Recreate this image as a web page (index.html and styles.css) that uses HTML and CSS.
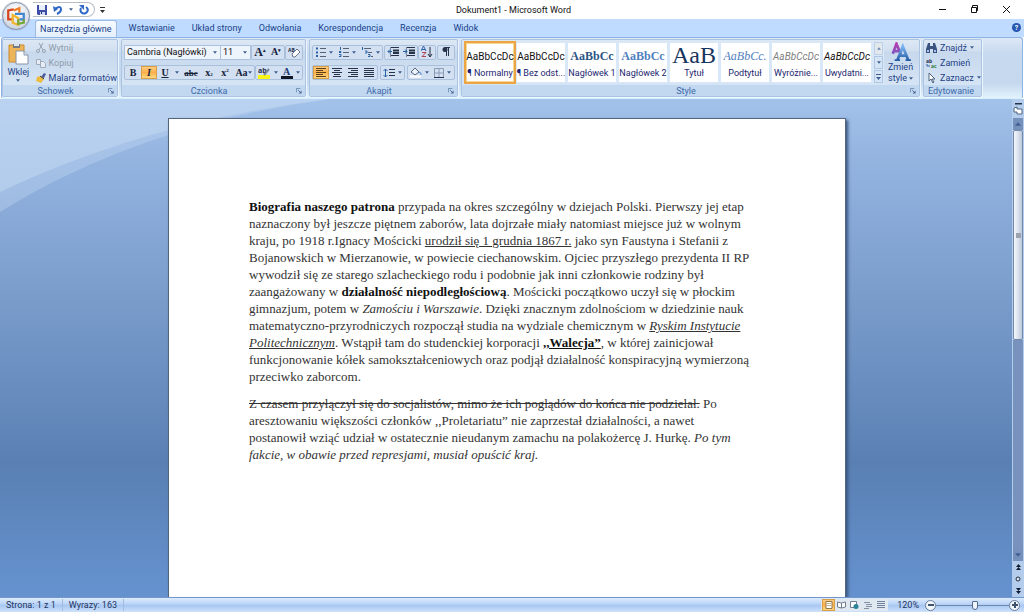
FILE: index.html
```html
<!DOCTYPE html>
<html lang="pl">
<head>
<meta charset="utf-8">
<title>Dokument1 - Microsoft Word</title>
<link rel="stylesheet" href="styles.css">
</head>
<body>
<svg width="0" height="0" class="defs" aria-hidden="true">
  <symbol id="arrow" viewBox="0 0 5 3"><path d="M0 0h5L2.500 3z" fill="#3f5f92"/></symbol>
  <symbol id="launch" viewBox="0 0 7 7"><path d="M.5 5V.5H5" fill="none" stroke="#6583ae"/><path d="M2.500 2.500L5 5" stroke="#4a6693"/><path d="M6.500 3v3.500H3z" fill="#4a6693"/></symbol>
  <linearGradient id="ga" x1="0" y1="0" x2="0" y2="1"><stop offset="0" stop-color="#b33fb0"/><stop offset="1" stop-color="#7d58c2"/></linearGradient>
  <linearGradient id="gb" x1="0" y1="0" x2="0" y2="1"><stop offset="0" stop-color="#79b4f2"/><stop offset="1" stop-color="#275ea8"/></linearGradient>
</svg>
<div class="app">
  <header class="titlebar">
    <button class="office" aria-label="Przycisk pakietu Office">
      <svg width="20" height="20" viewBox="0 0 18 18" fill="none" stroke-width="2"><path d="M7 3L2 4v8h5" stroke="#d6461e"/><path d="M7 4l5-2v4" stroke="#ef7d23"/><path d="M8 7h8v5h-4" stroke="#4187d0"/><path d="M6 8v7l5 2v-6z" stroke="#f1b62a"/><path d="M11 12v4l5-1v-3" stroke="#76a83c"/></svg>
    </button>
    <div class="quick">
      <button aria-label="Zapisz"><svg width="10" height="10" viewBox="0 0 10 10"><path d="M0 0h10v10H1L0 9z" fill="#3c4ea8"/><path d="M2 0h6v5H2z" fill="#e8effb"/><path d="M3 7h5v3H3z" fill="#cfd8ef"/><path d="M4 7h1v2H4z" fill="#28367e"/></svg></button>
      <button aria-label="Cofnij"><svg width="10" height="10" viewBox="0 0 10 10"><path d="M2 4Q8 0 8 4.500Q8 7 4 9" fill="none" stroke="#2f67c8" stroke-width="2"/><path d="M0 1l1 6 4-3z" fill="#2f67c8"/></svg></button>
      <button aria-label="Lista cofania"><svg width="4" height="3"><use href="#arrow"/></svg></button>
      <button aria-label="Powtórz"><svg width="10" height="10" viewBox="0 0 10 10"><path d="M7 2Q10 4 8 7Q5 10 2 7Q1 5 2 3" fill="none" stroke="#2f67c8" stroke-width="2"/><path d="M0 0h5v5z" fill="#2f67c8"/></svg></button>
    </div>
    <button class="more" aria-label="Dostosuj pasek"><svg width="5" height="6" viewBox="0 0 5 6"><path d="M0 0h5v1H0zM0 3h5L2.500 6z" fill="#333"/></svg></button>
    <h1>Dokument1 - Microsoft Word</h1>
    <div class="window">
      <button aria-label="Minimalizuj"><svg width="9" height="9"><path d="M1 4.500h7" stroke="#111"/></svg></button>
      <button aria-label="Przywróć"><svg width="9" height="9" fill="none" stroke="#111"><path d="M1.500 2.500h5v5h-5zM2.500 2V.5h5v5H7"/></svg></button>
      <button aria-label="Zamknij"><svg width="9" height="9" stroke="#111"><path d="M1 1l7 7M8 1L1 8"/></svg></button>
    </div>
  </header>
  <nav class="tabs">
    <a href="#" class="active">Narzędzia główne</a><a href="#">Wstawianie</a><a href="#">Układ strony</a><a href="#">Odwołania</a><a href="#">Korespondencja</a><a href="#">Recenzja</a><a href="#">Widok</a>
    <button class="help" aria-label="Pomoc">?</button>
  </nav>
  <section class="ribbon">
    <section class="group clip">
      <div class="body">
        <button class="big"><svg width="21" height="22" viewBox="0 0 21 22"><path d="M1 2h15v17H1z" fill="#edb557" stroke="#c98a2f"/><path d="M5 1h7v4H5z" fill="#747a84"/><path d="M6 1h5v2H6z" fill="#dde3ea"/><path d="M8 8h8l4 4v9H8z" fill="#fff" stroke="#8894aa"/><path d="M16 8v4h4" fill="#dce7f7" stroke="#8894aa"/></svg><span>Wklej</span><svg width="4" height="3"><use href="#arrow"/></svg></button>
        <div class="stack">
          <button disabled><svg width="10" height="10" viewBox="0 0 10 10" fill="none" stroke="#98a3b3"><path d="M3 0l4 7M7 0L3 7"/><circle cx="2" cy="8" r="1.500"/><circle cx="8" cy="8" r="1.500"/></svg>Wytnij</button>
          <button disabled><svg width="10" height="10" viewBox="0 0 10 10" fill="#e7edf4" stroke="#a0abba"><path d="M.5 1.500h4v5h-4zM4.500 3.500h3l2 2v4h-5z"/></svg>Kopiuj</button>
          <button><svg width="10" height="10" viewBox="0 0 10 10"><path d="M5 4l3-4 2 1-2 4z" fill="#505b9d"/><path d="M1 4l4-1 3 3-3 4-5-2z" fill="#edbd40"/><path d="M4 3l4 3" stroke="#333b60"/></svg>Malarz formatów</button>
        </div>
      </div>
      <footer><h2>Schowek</h2><button aria-label="Schowek: opcje"><svg width="6" height="6" viewBox="0 0 7 7"><use href="#launch" width="7" height="7"/></svg></button></footer>
    </section>
    <section class="group font">
      <div class="body rows">
        <div class="row">
          <span class="combo name"><select aria-label="Czcionka"><option>Cambria (Nagłówki)</option></select><svg width="4" height="3"><use href="#arrow"/></svg></span><span class="combo size"><select aria-label="Rozmiar"><option>11</option></select><svg width="4" height="3"><use href="#arrow"/></svg></span>
          <div class="set"><button class="serif grow" aria-label="Zwiększ">A<sup>▴</sup></button><button class="serif small" aria-label="Zmniejsz">A<sup>▾</sup></button></div>
          <div class="set"><button aria-label="Wyczyść formatowanie"><svg width="12" height="11" viewBox="0 0 12 11"><text x="0" y="5" class="micro">AB</text><path d="M4 7l5-5 3 3-5 5H5z" fill="#fff" stroke="#6b7691"/></svg></button></div>
        </div>
        <div class="row"><div class="set">
          <button class="serif">B</button><button class="serif on"><i>I</i></button><button class="serif"><u>U</u></button><button class="thin" aria-label="Podkreślenie"><svg width="4" height="3"><use href="#arrow"/></svg></button><button class="serif abc"><s>abc</s></button><button class="serif">x<sub>2</sub></button><button class="serif">x<sup>2</sup></button><button class="serif case">Aa<svg width="4" height="3"><use href="#arrow"/></svg></button></div>
          <div class="set"><button class="wide" aria-label="Wyróżnienie"><svg width="13" height="12" viewBox="0 0 13 12"><path d="M0 8h12v4H0z" fill="#f9f514"/><text x="0" y="6" class="tiny">ab</text><path d="M6 8l5-6" stroke="#788394" stroke-width="2"/></svg><svg width="4" height="3"><use href="#arrow"/></svg></button><button class="wide" aria-label="Kolor czcionki"><svg width="12" height="12" viewBox="0 0 12 12"><text x="2" y="8" class="letter">A</text><path d="M0 9h12v3H0z" fill="#101828"/></svg><svg width="4" height="3"><use href="#arrow"/></svg></button></div>
        </div>
      </div>
      <footer><h2>Czcionka</h2><button aria-label="Czcionka: opcje"><svg width="6" height="6" viewBox="0 0 7 7"><use href="#launch" width="7" height="7"/></svg></button></footer>
    </section>
    <section class="group para">
      <div class="body rows">
        <div class="row">
          <div class="set"><button class="wide" aria-label="Punktory"><svg width="10" height="10"><path d="M0 1.500h2M0 5.500h2M0 9h2" stroke="#2862a6" stroke-width="2"/><path d="M4 1.500h6M4 5.500h6M4 9.500h6" stroke="#546078"/></svg><svg width="4" height="3"><use href="#arrow"/></svg></button><button class="wide" aria-label="Numerowanie"><svg width="10" height="10"><path d="M1.500 0v3M0 4.500h2v1H0M0 7.500h2v2H0" fill="none" stroke="#2862a6"/><path d="M4 1.500h6M4 5.500h6M4 9.500h6" stroke="#546078"/></svg><svg width="4" height="3"><use href="#arrow"/></svg></button><button class="wide" aria-label="Lista wielopoziomowa"><svg width="12" height="10"><path d="M1.500 0v3M4 4h2v2H4M7 7.500h2v2H7" fill="none" stroke="#2862a6"/><path d="M3 1.500h7M7 5.500h4M10 9.500h2" stroke="#546078"/></svg><svg width="4" height="3"><use href="#arrow"/></svg></button></div>
          <div class="set"><button aria-label="Zmniejsz wcięcie"><svg width="12" height="10"><path d="M4 .5h8M4 8.500h8" stroke="#27334a"/><path d="M6 3.500h6M6 6h6" stroke="#27334a" stroke-width="2"/><path d="M3.500.5v9" stroke="#27334a" stroke-dasharray="1 1"/><path d="M5 4.500H1M3 2.500l-2 2 2 2" fill="none" stroke="#2862a6"/></svg></button><button aria-label="Zwiększ wcięcie"><svg width="12" height="10"><path d="M4 .5h8M4 8.500h8" stroke="#27334a"/><path d="M6 3.500h6M6 6h6" stroke="#27334a" stroke-width="2"/><path d="M3.500.5v9" stroke="#27334a" stroke-dasharray="1 1"/><path d="M0 4.500h4M2 2.500l2 2-2 2" fill="none" stroke="#2862a6"/></svg></button></div>
          <div class="set"><button aria-label="Sortuj"><svg width="12" height="12" viewBox="0 0 12 12" fill="none"><path d="M0 5l2.500-5L5 5M1 3.500h3" stroke="#315fae"/><path d="M1 6.500h4l-4 4h4" stroke="#af4253"/><path d="M9 1v9M7 8l2 3 2-3" stroke="#222c40"/></svg></button></div>
          <div class="set"><button aria-label="Znaki formatowania"><svg width="8" height="10"><path d="M4.500 0v9M6.500 0v9M3 .5h5" stroke="#27334a"/><circle cx="3" cy="2.500" r="2.500" fill="#27334a"/></svg></button></div>
        </div>
        <div class="row">
          <div class="set"><button class="on" aria-label="Do lewej"><svg width="10" height="9"><path d="M0 .5h10M0 2.500h7M0 4.500h10M0 6.500h7M0 8.500h10" stroke="#5b3f16"/></svg></button><button aria-label="Wyśrodkuj"><svg width="10" height="9"><path d="M0 .5h10M2 2.500h6M0 4.500h10M2 6.500h6M1 8.500h8" stroke="#27334a"/></svg></button><button aria-label="Do prawej"><svg width="10" height="9"><path d="M0 .5h10M3 2.500h7M0 4.500h10M3 6.500h7M0 8.500h10" stroke="#27334a"/></svg></button><button aria-label="Wyjustuj"><svg width="10" height="9"><path d="M0 .5h10M0 2.500h10M0 4.500h10M0 6.500h10M0 8.500h10" stroke="#27334a"/></svg></button></div>
          <div class="set"><button class="wide" aria-label="Interlinia"><svg width="12" height="10"><path d="M2.500 1v8M.5 3l2-2 2 2M.5 7l2 2 2-2" fill="none" stroke="#2862a6"/><path d="M6 1.500h6M6 4.500h6M6 7.500h6" stroke="#27334a"/></svg><svg width="4" height="3"><use href="#arrow"/></svg></button></div>
          <div class="set"><button class="wide" aria-label="Cieniowanie"><svg width="12" height="11" viewBox="0 0 12 11"><path d="M1 5l4-4 4 4-4 3z" fill="#edf3fb" stroke="#53647f"/><path d="M9 5q3 1 2 3" fill="none" stroke="#4382c8"/><path d="M0 9.500h11" stroke="#fff" stroke-width="2"/></svg><svg width="4" height="3"><use href="#arrow"/></svg></button><button class="wide" aria-label="Obramowanie"><svg width="10" height="10" fill="none"><path d="M.5.5h9v9M.5.5v9M5 0v9M0 5h9" stroke="#8b9cb7"/><path d="M0 9.500h10" stroke="#27334a"/></svg><svg width="4" height="3"><use href="#arrow"/></svg></button></div>
        </div>
      </div>
      <footer><h2>Akapit</h2><button aria-label="Akapit: opcje"><svg width="6" height="6" viewBox="0 0 7 7"><use href="#launch" width="7" height="7"/></svg></button></footer>
    </section>
    <section class="group styles">
      <div class="body">
        <div class="gallery">
          <button class="chosen"><b class="plain">AaBbCcDc</b><span>¶ Normalny</span></button>
          <button><b class="plain">AaBbCcDc</b><span>¶ Bez odst...</span></button>
          <button><b class="h1">AaBbCc</b><span>Nagłówek 1</span></button>
          <button><b class="h2">AaBbCc</b><span>Nagłówek 2</span></button>
          <button><b class="title">AaB</b><span>Tytuł</span></button>
          <button><b class="sub">AaBbCc.</b><span>Podtytuł</span></button>
          <button><b class="soft">AaBbCcDc</b><span>Wyróżnie...</span></button>
          <button><b class="em">AaBbCcDc</b><span>Uwydatni...</span></button>
          <div class="steps"><button disabled aria-label="W górę"><svg width="4" height="3" class="flip"><use href="#arrow"/></svg></button><button aria-label="W dół"><svg width="4" height="3"><use href="#arrow"/></svg></button><button aria-label="Więcej"><svg width="5" height="6" viewBox="0 0 5 6"><path d="M0 0h5v1H0zM0 3h5L2.500 6z" fill="#3f5f92"/></svg></button></div>
        </div>
        <button class="big change"><svg width="22" height="20" viewBox="0 0 22 22"><path fill="none" stroke="url(#ga)" stroke-width="3" d="M2 13L6 2l5 12M3 10h6"/><path fill="none" stroke="url(#gb)" stroke-width="3" d="M7 20l6-15 6 15M9 15h8"/><path d="M4 20h6M16 20h6" stroke="#275ea8" stroke-width="2"/></svg><span class="label">Zmień</span><span class="label">style <svg width="4" height="3"><use href="#arrow"/></svg></span></button>
      </div>
      <footer><h2>Style</h2><button aria-label="Style: opcje"><svg width="6" height="6" viewBox="0 0 7 7"><use href="#launch" width="7" height="7"/></svg></button></footer>
    </section>
    <section class="group edit">
      <div class="body"><div class="stack">
        <button><svg width="11" height="10" viewBox="0 0 11 10"><path d="M2 0h2v3h3V0h2l2 6v4H7V6H4v4H0V6z" fill="#3b5380"/><path d="M1 7h2v2H1zM8 7h2v2H8z" fill="#a7c4ea"/></svg>Znajdź<svg width="4" height="3"><use href="#arrow"/></svg></button>
        <button><svg width="11" height="10" viewBox="0 0 11 10"><text x="0" y="5" class="micro">ab</text><text x="5" y="10" class="micro green">ac</text><path d="M1 6v2h3" fill="none" stroke="#3762a5"/></svg>Zamień</button>
        <button><svg width="11" height="10" viewBox="0 0 11 10"><path d="M3 0v8l2-2 2 4 1-1-2-3h3z" fill="#fff" stroke="#53647f"/></svg>Zaznacz<svg width="4" height="3"><use href="#arrow"/></svg></button>
      </div></div>
      <footer><h2>Edytowanie</h2></footer>
    </section>
  </section>
  <main class="workspace">
    <svg class="waves" width="340" height="120" viewBox="0 0 340 120"><path d="M0 0H330Q150 22 0 93z" fill="#c5dbf4" fill-opacity=".5"/><path d="M0 0H330Q140 26 0 113z" fill="#c5dbf4" fill-opacity=".35"/></svg>
    <div class="canvas">
      <article class="page">
        <p><b>Biografia naszego patrona</b> przypada na okres szczególny w dziejach Polski. Pierwszy jej etap<br>naznaczony był jeszcze piętnem zaborów, lata dojrzałe miały natomiast miejsce już w wolnym<br>kraju, po 1918 r.Ignacy Mościcki <u>urodził się 1 grudnia 1867 r.</u> jako syn Faustyna i Stefanii z<br>Bojanowskich w Mierzanowie, w powiecie ciechanowskim. Ojciec przyszłego prezydenta II RP<br>wywodził się ze starego szlacheckiego rodu i podobnie jak inni członkowie rodziny był<br>zaangażowany w <b>działalność niepodległościową</b>. Mościcki początkowo uczył się w płockim<br>gimnazjum, potem w <i>Zamościu i Warszawie</i>. Dzięki znacznym zdolnościom w dziedzinie nauk<br>matematyczno-przyrodniczych rozpoczął studia na wydziale chemicznym w <i><u>Ryskim Instytucie</u></i><br><i><u>Politechnicznym</u></i>. Wstąpił tam do studenckiej korporacji <b><u>,,Walecja”</u></b>, w której zainicjował<br>funkcjonowanie kółek samokształceniowych oraz podjął działalność konspiracyjną wymierzoną<br>przeciwko zaborcom.</p>
        <p><s>Z czasem przyłączył się do socjalistów, mimo że ich poglądów do końca nie podzielał.</s> Po<br>aresztowaniu większości członków ,,Proletariatu” nie zaprzestał działalności, a nawet<br>postanowił wziąć udział w ostatecznie nieudanym zamachu na polakożercę J. Hurkę. <i>Po tym</i><br><i>fakcie, w obawie przed represjami, musiał opuścić kraj.</i></p>
      </article>
    </div>
    <aside class="scroll">
      <button aria-label="Linijka" class="ruler"><svg width="10" height="12" viewBox="0 0 10 12"><path d="M2 .5h7" stroke="#26334c" stroke-width="2"/><path d="M1 5l3-1v2h5v5H4V9H1z" fill="#fff" stroke="#4e6485"/></svg></button>
      <button aria-label="Przewiń w górę" class="end"><svg width="6" height="4" class="flip"><use href="#arrow"/></svg></button>
      <div class="thumb"></div>
      <div class="track"></div>
      <button aria-label="Przewiń w dół" class="end"><svg width="6" height="4"><use href="#arrow"/></svg></button>
      <button aria-label="Poprzednia strona" class="jump"><svg width="5" height="6"><path d="M0 3l2.500-3L5 3zM0 6l2.500-3L5 6z" fill="#111c30"/></svg></button>
      <button aria-label="Wybierz obiekt" class="jump"><svg width="6" height="6"><circle cx="3" cy="3" r="2" fill="#dbe6f5" stroke="#222c3d"/></svg></button>
      <button aria-label="Następna strona" class="jump"><svg width="5" height="6"><path d="M0 0l2.500 3L5 0zM0 3l2.500 3L5 3z" fill="#111c30"/></svg></button>
    </aside>
  </main>
  <footer class="status">
    <span class="cell">Strona: 1 z 1</span><span class="cell">Wyrazy: 163</span>
    <div class="views">
      <button class="on" aria-label="Układ wydruku"><svg width="8" height="8"><path d="M1 .5h6v7H1z" fill="#fff" stroke="#8d7950"/><path d="M2 2.500h4M2 4.500h4" stroke="#c5b38f"/></svg></button>
      <button aria-label="Czytanie"><svg width="9" height="8"><path d="M.5 1l4 1 4-1v5l-4 1-4-1zM4.500 2v5" fill="#fff" stroke="#717e92"/></svg></button>
      <button aria-label="Układ sieci Web"><svg width="9" height="8"><path d="M.5.5h6v6h-6z" fill="#fff" stroke="#717e92"/><circle cx="6" cy="5.500" r="2.500" fill="#2b839b"/></svg></button>
      <button aria-label="Konspekt"><svg width="8" height="8"><path d="M0 1.500h6M2 3.500h6M2 5.500h6M0 7.500h5" stroke="#8391a5"/></svg></button>
      <button aria-label="Wersja robocza"><svg width="8" height="8"><path d="M0 .5h8M0 2.500h8M0 4.500h8M0 6.500h8" stroke="#71829a"/></svg></button>
    </div>
    <label for="zoom">120%</label>
    <button class="round" aria-label="Pomniejsz"><svg width="6" height="6"><path d="M0 3h6" stroke="#3e5370" stroke-width="2"/></svg></button>
    <input id="zoom" type="range" min="10" max="190" value="106">
    <button class="round" aria-label="Powiększ"><svg width="6" height="6"><path d="M0 3h6M3 0v6" stroke="#3e5370" stroke-width="2"/></svg></button>
  </footer>
</div>
</body>
</html>
```
FILE: styles.css
```css
* { box-sizing: border-box; }
body { margin: 0; font: 9px/12px Roboto, "Open Sans", sans-serif; color: #1d3f86; }
button, select { font: inherit; color: inherit; border: 0; padding: 0; margin: 0; background: none; }
button { display: flex; align-items: center; justify-content: center; }
h1, h2, p { margin: 0; font-weight: 400; }
svg { flex: none; }
.defs { position: absolute; }
.app { height: 100vh; display: flex; flex-direction: column; overflow: hidden; }

.titlebar { height: 19px; flex: none; display: flex; align-items: center; background: #fff; position: relative; }
.titlebar h1 { flex: 1; text-align: center; font-size: 9px; color: #111; padding-right: 20px; }
.office { position: absolute; z-index: 2; left: 2px; top: 2px; width: 28px; height: 28px; border-radius: 50%; border: 1px solid #8793a7; background: radial-gradient(circle at 50% 30%, #fff, #dbe1ea 60%, #b6c2d3); box-shadow: 0 0 1px #667791; }
.quick { margin-left: 32px; width: 63px; height: 15px; display: flex; align-items: center; gap: 6px; padding-left: 4px; border: 1px solid #b8bdc6; border-left-color: #fff; border-radius: 0 8px 8px 0; }
.quick, .more { flex: none; }
.more { width: 14px; }
.window { display: flex; gap: 23px; padding-right: 13px; }

.tabs { height: 18px; flex: none; display: flex; background: #bfdbff; padding: 1px 3px 0 35px; color: #174088; }
.tabs a { color: inherit; text-decoration: none; white-space: nowrap; line-height: 17px; margin-right: 17px; }
.tabs a.active { padding: 0 4px; line-height: 16px; background: linear-gradient(#f7fbff, #e3effc); border: 1px solid #9dbbe3; border-bottom: 0; border-radius: 3px 3px 0 0; margin-right: 12px; }
.tabs .help { margin: 3px 0 0 auto; width: 9px; height: 9px; border-radius: 50%; background: #2557b0; color: #fff; font-size: 7px; font-weight: 700; }

.ribbon { height: 62px; flex: none; display: flex; gap: 3px; padding: 1px 0; margin: 0 1px; border: 1px solid #8db2e3; border-bottom-color: #d8f1ff; border-radius: 3px; background: linear-gradient(#dce8f6, #c8daef 25%, #c5d8ee 75%, #e2f2fd); }
.group { display: flex; flex-direction: column; flex: none; border: 1px solid #aac4e2; border-radius: 2px; box-shadow: 1px 1px 0 #eef6fd; background: linear-gradient(#dde8f5, #d1dfef 20%, #c7d8ed 21%, #dae9f7); overflow: hidden; }
.group .body { flex: 1; display: flex; min-height: 0; }
.group > footer { height: 11px; flex: none; display: flex; align-items: center; background: #c1d8f0; color: #3e6aaa; padding-right: 3px; }
.group h2 { flex: 1; text-align: center; font-size: 9px; line-height: 10px; }
.clip { width: 116px; }
.font { width: 185px; }
.para { width: 149px; }
.styles { width: 459px; }
.edit { width: 59px; }

.big { flex-direction: column; width: 34px; gap: 2px; line-height: 10px; }
.stack { display: flex; flex-direction: column; justify-content: space-around; align-items: flex-start; padding-left: 2px; }
.stack button { gap: 3px; line-height: 14px; white-space: nowrap; }
.stack button:disabled { color: #8f9aab; }

.rows { flex-direction: column; justify-content: space-around; padding: 2px; }
.row { display: flex; justify-content: space-between; }
.set { display: flex; height: 15px; border: 1px solid #a9c0dd; border-radius: 2px; background: #d2e0f1; }
.set button { width: 16px; gap: 2px; color: #17233b; }
.set .wide { width: 23px; gap: 3px; }
.set .thin { width: 8px; }
.set .abc { width: 20px; }
.set .case { width: 21px; }
.on { background: linear-gradient(#fbd08c, #fdb04a 50%, #ffe08a); box-shadow: inset 0 0 0 1px #d99f45; }
.set .serif { font: bold 10px/12px "Liberation Serif", serif; gap: 0; }
.set .grow { font-size: 12px; }
.set .abc { font-size: 9px; }
.serif sup, .serif sub { font-size: 5px; line-height: 5px; }
.serif sup { align-self: flex-start; padding-top: 2px; }
.serif sub { align-self: flex-end; padding-bottom: 2px; }
.combo { display: grid; align-items: center; justify-items: end; height: 15px; border: 1px solid #abc1de; background: #eef4fb; color: #111; }
.combo > * { grid-area: 1 / 1; }
.combo svg { margin-right: 3px; pointer-events: none; }
.combo select { width: 100%; appearance: none; padding-left: 2px; }
.name { width: 97px; }
.size { width: 31px; margin-left: -1px; }
.micro { font: bold 5px "Open Sans", sans-serif; fill: #1d2b48; }
.green { fill: #2b7a35; }
.tiny { font: bold 7px "Open Sans", sans-serif; fill: #1d2b48; }
.letter { font: bold 10px "Liberation Serif", serif; fill: #1f3a75; }

.styles .body { padding: 2px; justify-content: space-between; }
.gallery { display: flex; gap: 3px; background: #d9e8f8; padding: 1px 1px 1px 2px; align-items: center; }
.gallery > button { width: 48px; height: 39px; flex-direction: column; justify-content: flex-end; align-items: center; background: #fff; color: #1b1e6e; padding-bottom: 1px; }
.gallery > .chosen { box-shadow: 0 0 0 2px #eba544, inset 0 0 0 1px #f8d68e; }
.gallery b { height: 19px; font-weight: 400; font-size: 10px; line-height: 19px; white-space: nowrap; color: #111; }
.gallery span { line-height: 15px; white-space: nowrap; }
.gallery .h1 { font: bold 12px/19px "Liberation Serif", serif; color: #2c5486; }
.gallery .h2 { font: bold 12px/19px "Liberation Serif", serif; color: #4f81bd; }
.gallery .title { font: 24px/22px "Liberation Serif", serif; color: #17365d; height: 22px; }
.gallery .sub { font: italic 12px/19px "Liberation Serif", serif; color: #4f81bd; }
.gallery .soft { font-style: italic; color: #808080; }
.gallery .em { font-style: italic; }
.steps { display: flex; flex-direction: column; gap: 1px; }
.steps button { width: 9px; height: 13px; border: 1px solid #b0c8e4; background: #d5e5f6; }
.steps button:disabled { background: #e8e8e8; opacity: .7; }
.flip { transform: rotate(180deg); }
.change { width: 36px; gap: 0; }
.label { display: flex; align-items: center; gap: 2px; line-height: 11px; }

.workspace { flex: 1; min-height: 0; display: flex; position: relative; background: linear-gradient(#a3c2ea, #94b4e0 12%, #5a80b3 73%, #6592cf 100%); }
.waves { position: absolute; left: 0; top: 0; }
.canvas { flex: 1; display: flex; justify-content: center; padding: 19px 0 0 2px; overflow: hidden; position: relative; }
.page { width: 678px; background: #fff; border: 1px solid #54657f; border-bottom: 0; box-shadow: 2px 2px 3px #39557f; padding: 79px 80px 0; font: 13px/17px "Liberation Serif", serif; color: #333; white-space: nowrap; }
.page p { margin-bottom: 10px; }
.page b { color: #111; }
.scroll { width: 12px; display: flex; flex-direction: column; align-items: stretch; background: #b5cdec; position: relative; padding: 0 1px; }
.ruler { height: 19px; }
.end { height: 12px; background: #7590ba; }
.thumb { flex: 209; border: 1px solid #7389ab; border-radius: 2px; background: linear-gradient(90deg, #f4f7fb, #dbe3ee 50%, #bdc9da); display: grid; place-items: center; }
.thumb::after { content: ""; width: 5px; height: 5px; background: #9ba3b0; }
.track { flex: 210; background: #7793bd; }
.jump { height: 12px; }

.status { height: 15px; flex: none; display: flex; align-items: center; background: linear-gradient(#dcebfd, #b9d3f7 45%, #a5c5f1 50%, #cfe2fb); border-top: 1px solid #7397c9; color: #1d3461; padding-right: 4px; }
.cell { padding: 0 6px; border-right: 1px solid #a2bde2; }
.views { margin-left: auto; display: flex; height: 12px; background: #dfe7f0; padding: 0 1px; margin-right: 9px; }
.views button { width: 13px; }
.status label { margin-right: 6px; }
.round { width: 11px; height: 11px; border: 1px solid #667b9b; border-radius: 50%; background: #f3f7fc; }
#zoom { appearance: none; width: 73px; height: 10px; margin: 0; background: linear-gradient(#6e87ad, #6e87ad) center / 100% 1px no-repeat; }
#zoom::-webkit-slider-thumb { appearance: none; width: 6px; height: 9px; border: 1px solid #52698e; border-radius: 1px 1px 3px 3px; background: #f0f5fc; }
```
